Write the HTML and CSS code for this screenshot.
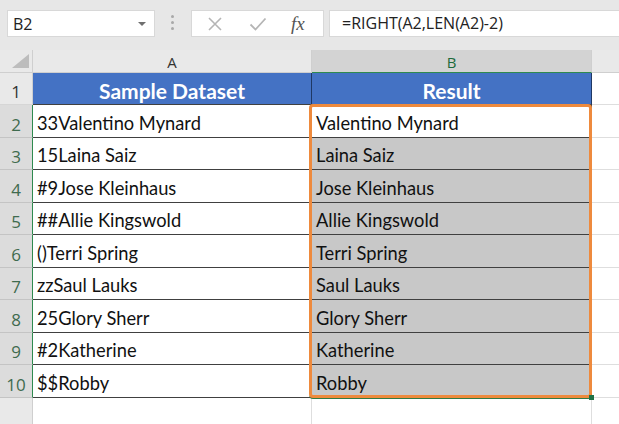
FILE: index.html
```html
<!DOCTYPE html>
<html lang="en">
<head>
  <meta charset="UTF-8" />
  <title>RIGHT and LEN formula</title>
  <link rel="stylesheet" href="styles.css">
</head>
<body>
  <div class="formula-bar">
    <div class="name-box"><span>B2</span><i class="caret"></i></div>
    <div class="grip"><i></i><i></i><i></i></div>
    <div class="fx-box">
      <svg class="ico-x" width="16" height="16" viewBox="0 0 16 16"><path d="M2 2L14 14M14 2L2 14" stroke="#b5b5b5" stroke-width="1.6" fill="none"/></svg>
      <svg class="ico-ok" width="18" height="16" viewBox="0 0 18 16"><path d="M1.5 8.5L6.5 13.5L16.5 2.5" stroke="#b5b5b5" stroke-width="1.8" fill="none"/></svg>
      <span class="fx">fx</span>
    </div>
    <div class="formula">=RIGHT(A2,LEN(A2)-2)</div>
  </div>

  <div class="sheet">
    <div class="corner"><svg width="17" height="14" viewBox="0 0 17 14"><polygon points="17,0 17,14 0,14" fill="#bdbdbd"/></svg></div>
    <div class="col-head">A</div>
    <div class="col-head active">B</div>
    <div class="col-head blank"></div>

    <div class="row-head">1</div>
    <div class="cell title">Sample Dataset</div>
    <div class="cell title">Result</div>
    <div class="fill"></div>

    <div class="row-head sel">2</div>
    <div class="cell">33Valentino Mynard</div>
    <div class="results">
      <div class="cell current">Valentino Mynard</div>
      <div class="cell">Laina Saiz</div>
      <div class="cell">Jose Kleinhaus</div>
      <div class="cell">Allie Kingswold</div>
      <div class="cell">Terri Spring</div>
      <div class="cell">Saul Lauks</div>
      <div class="cell">Glory Sherr</div>
      <div class="cell">Katherine</div>
      <div class="cell">Robby</div>
    </div>
    <div class="fill"></div>

    <div class="row-head sel">3</div>
    <div class="cell">15Laina Saiz</div>
    <div class="fill"></div>

    <div class="row-head sel">4</div>
    <div class="cell">#9Jose Kleinhaus</div>
    <div class="fill"></div>

    <div class="row-head sel">5</div>
    <div class="cell">##Allie Kingswold</div>
    <div class="fill"></div>

    <div class="row-head sel">6</div>
    <div class="cell">()Terri Spring</div>
    <div class="fill"></div>

    <div class="row-head sel">7</div>
    <div class="cell">zzSaul Lauks</div>
    <div class="fill"></div>

    <div class="row-head sel">8</div>
    <div class="cell">25Glory Sherr</div>
    <div class="fill"></div>

    <div class="row-head sel">9</div>
    <div class="cell">#2Katherine</div>
    <div class="fill"></div>

    <div class="row-head sel">10</div>
    <div class="cell">$$Robby</div>
    <div class="fill"></div>

    <div class="row-head"></div>
    <div class="empty"></div>
    <div class="empty"></div>
    <div class="fill"></div>
  </div>
</body>
</html>
```

FILE: styles.css
```css
body {
  margin: 0;
  background-color: #fff;
  font-family: Lato, "Open Sans", sans-serif;
  width: 619px;
  height: 424px;
  overflow: hidden;
}
.formula-bar {
  display: flex;
  align-items: flex-start;
  height: 50px;
  box-sizing: border-box;
  padding: 10px 0 0 7px;
  background-color: #e7e7e7;
  font-family: "Open Sans", sans-serif;
}
.name-box {
  display: flex;
  align-items: center;
  width: 148px;
  height: 27px;
  box-sizing: border-box;
  padding-left: 5px;
  background-color: #fff;
  border: 1px solid #d8d8d8;
  font-size: 16px;
  color: #222;
}
.caret {
  margin-left: auto;
  margin-right: 8px;
  border-left: 4px solid transparent;
  border-right: 4px solid transparent;
  border-top: 4px solid #6f6f6f;
}
.grip {
  display: flex;
  flex-direction: column;
  gap: 3px;
  margin: 5px 0 0 16px;
}
.grip i {
  width: 3px;
  height: 3px;
  border-radius: 50%;
  background-color: #a9a9a9;
}
.fx-box {
  display: flex;
  align-items: center;
  width: 133px;
  height: 27px;
  box-sizing: border-box;
  margin-left: 17px;
  padding-left: 15px;
  background-color: #fff;
  border: 1px solid #d8d8d8;
}
.ico-ok {
  margin-left: 26px;
}
.fx {
  margin-left: 24px;
  font-family: "Liberation Serif", serif;
  font-style: italic;
  font-size: 19px;
  color: #555;
}
.formula {
  flex: 1;
  height: 27px;
  box-sizing: border-box;
  margin: 0 -10px 0 5px;
  padding: 1px 0 0 12px;
  background-color: #fff;
  border: 1px solid #d8d8d8;
  font-size: 16px;
  line-height: 23px;
  color: #222;
}

.sheet {
  display: grid;
  grid-template-columns: 33px 279px 280px 1fr;
  grid-template-rows: 23px 32px 33px 32px 33px 32px 33px 32px 33px 32px 33px 40px;
}
.sheet div {
  box-sizing: border-box;
}
.corner {
  display: flex;
  align-items: flex-end;
  justify-content: flex-end;
  padding: 0 3px 4px 0;
  background-color: #e9e9e9;
  border-right: 1px solid #cfcfcf;
  border-bottom: 1px solid #cfcfcf;
}
.col-head {
  display: flex;
  justify-content: center;
  align-items: center;
  padding-top: 2px;
  font-family: "Open Sans", sans-serif;
  font-size: 15px;
  color: #333;
  background-color: #e9e9e9;
  border-right: 1px solid #cfcfcf;
  border-bottom: 1px solid #cfcfcf;
}
.col-head.active {
  background-color: #d3d3d3;
  color: #1d6b3c;
  border-bottom: 1px solid #2f8a4f;
}
.col-head.blank {
  border-right: none;
}
.row-head {
  display: flex;
  justify-content: center;
  align-items: flex-end;
  padding-bottom: 1px;
  font-family: "Open Sans", sans-serif;
  font-size: 17px;
  color: #333;
  background-color: #e9e9e9;
  border-right: 1px solid #cfcfcf;
  border-bottom: 1px solid #d6d6d6;
}
.row-head.sel {
  background-color: #dcdcdc;
  color: #3f6b4e;
  border-right: 1px solid #2f8a4f;
  border-bottom: 1px solid #c4c4c4;
}
.cell {
  display: flex;
  align-items: center;
  padding: 3px 0 0 4px;
  font-size: 18.3px;
  color: #111;
  background-color: #fff;
  border-right: 1px solid #404040;
  border-bottom: 1px solid #404040;
  white-space: nowrap;
}
.cell.title {
  justify-content: center;
  padding-left: 0;
  font-size: 21px;
  font-weight: bold;
  color: #fff;
  background-color: #4472c4;
  border-right-color: #1f3864;
}
.results {
  position: relative;
  grid-column: 3;
  grid-row: span 9;
  display: grid;
  grid-template-rows: 33px 32px 33px 32px 33px 32px 33px 32px 33px;
}
.results .cell {
  background-color: #c8c8c8;
}
.results .cell.current {
  background-color: #fff;
}
/* orange highlight round the result range */
.results::after {
  content: "";
  position: absolute;
  left: -3px;
  top: -1px;
  right: 0;
  bottom: 0;
  border: 3px solid #ee8a3d;
  border-radius: 4px;
  box-shadow: 0 1px 0 #2f7a45;
}
.results::before {
  content: "";
  position: absolute;
  right: -2px;
  bottom: -2px;
  width: 5px;
  height: 5px;
  background-color: #1e7145;
  z-index: 1;
}
.fill {
  background-color: #fff;
  border-bottom: 1px solid #dedede;
}
.empty {
  background-color: #fff;
  border-right: 1px solid #dedede;
}
```
